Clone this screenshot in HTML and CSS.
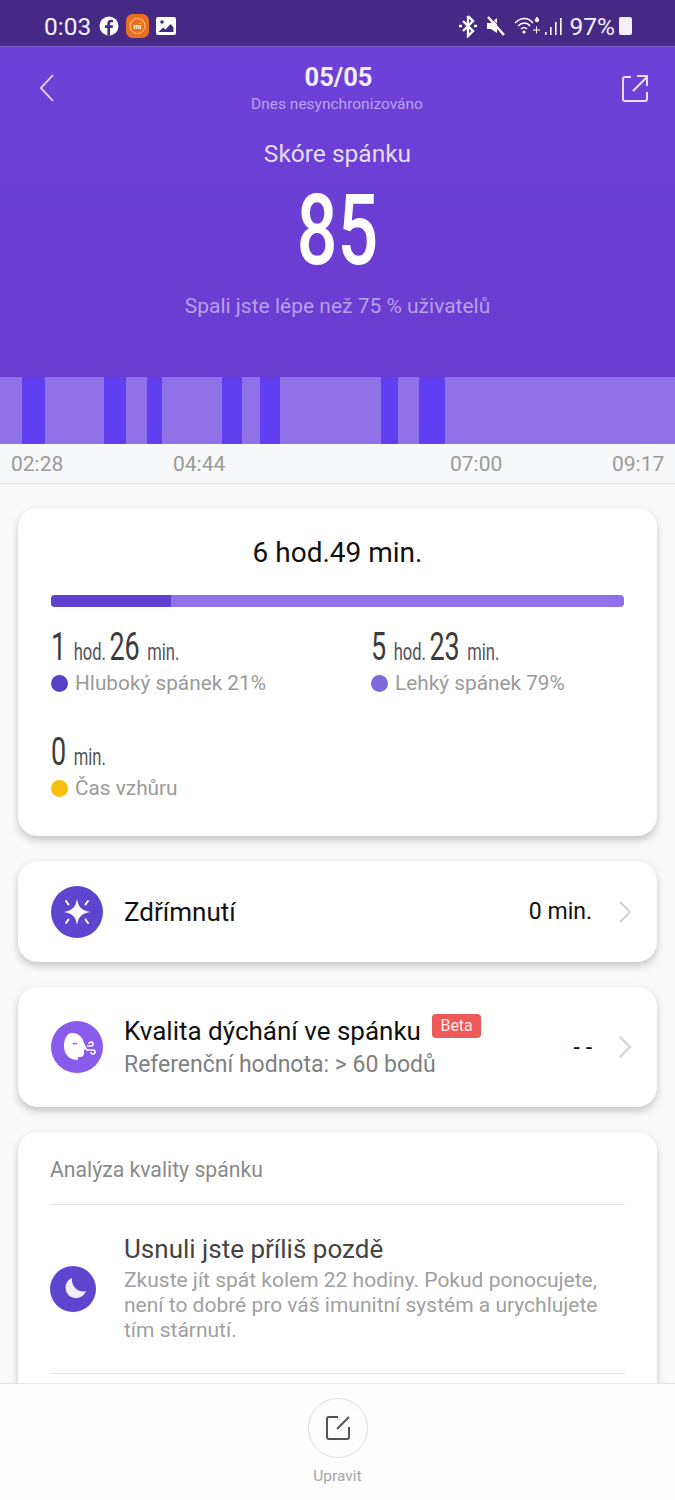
FILE: index.html
```html
<!DOCTYPE html>
<html lang="cs">
<head>
    <meta charset="UTF-8">
    <meta name="viewport" content="width=device-width, initial-scale=1.0">
    <title>Skóre spánku</title>
    <link rel="stylesheet" href="styles.css">
</head>
<body>
    <div class="status">
        <div class="status_left">
            <span class="clock">0:03</span>
            <svg class="st_icon" width="20" height="20" viewBox="0 0 20 20"><circle cx="10" cy="10" r="9.500" fill="#fff"/><path d="M11 19.500V12h2.600l.4-2.800h-3V7.600c0-.9.4-1.300 1.300-1.300H14V4c-.6-.1-1.300-.2-2-.2-2.200 0-3.600 1.300-3.600 3.500v1.900H6V12h2.400v7.500z" fill="#452a85"/></svg>
            <svg class="st_icon" width="23" height="24" viewBox="0 0 23 24"><path d="M7 0h9c4 0 7 3 7 7v10c0 4-3 7-7 7H7c-4 0-7-3-7-7V7c0-4 3-7 7-7z" fill="#e8701f"/><circle cx="11.500" cy="12" r="7.500" fill="none" stroke="#ffb27a" stroke-width="1.200"/><text class="mi_text" x="11.500" y="14.500" text-anchor="middle">mi</text></svg>
            <svg class="st_icon" width="20" height="20" viewBox="0 0 20 20"><rect x="0" y="1" width="20" height="18" rx="2" fill="#fff"/><circle cx="6" cy="6" r="1.800" fill="#452a85"/><path d="M2.500 16l4.500-4.500 2.500 2L14.500 8l3 3.500V16z" fill="#452a85"/></svg>
        </div>
        <div class="status_right">
            <svg class="st_bt" width="20" height="24" viewBox="0 0 20 24"><path d="M10 2v20l5-5L5 7M10 2l5 5L5 17" fill="none" stroke="#fff" stroke-width="2.400"/><path d="M1 12h3M16 12h3" stroke="#fff" stroke-width="2.400"/></svg>
            <svg class="st_mute" width="20" height="22" viewBox="0 0 20 22"><path d="M1 8h4l6-5v15l-6-4H1z" fill="#fff"/><path d="M2 2l16 18" stroke="#fff" stroke-width="2.400"/><path d="M2 2l16 18" stroke="#452a85" stroke-width=".8" transform="translate(1.500 -1.500)"/></svg>
            <svg class="st_wifi" width="27" height="22" viewBox="0 0 27 22"><g fill="none" stroke="#fff" stroke-width="1.500"><path d="M1 8c6-6 13-6 18 0"/><path d="M4 11c4-4 9-4 12 0"/><path d="M7 14c2-2 4-2 6 0"/></g><circle cx="10" cy="17" r="1.600" fill="#fff"/><path d="M23 2l1.800 3a1.800 1.800 0 1 1-3.600 0zM19 15h7M22.500 11.500v7" fill="#fff" stroke="#fff" stroke-width="1"/></svg>
            <svg class="st_signal" width="19" height="22" viewBox="0 0 19 22"><g fill="#fff"><rect x="1" y="17" width="1.600" height="3"/><rect x="6" y="12" width="1.600" height="8"/><rect x="11" y="7" width="1.600" height="13"/><rect x="16" y="3" width="1.600" height="17"/></g></svg>
            <span class="battery_text">97%</span>
            <div class="battery"></div>
        </div>
    </div>

    <div class="head">
        <div class="head_top">
            <svg class="head_icon" width="18" height="30" viewBox="0 0 18 30"><path d="M15 2L3 15l12 13" fill="none" stroke="#e9def9" stroke-width="1.800"/></svg>
            <div class="head_title">
                <p class="date">05/05</p>
                <p class="sync">Dnes nesynchronizováno</p>
            </div>
            <svg class="head_icon" width="28" height="28" viewBox="0 0 28 28"><path d="M10 3H4a2 2 0 0 0-2 2v20a2 2 0 0 0 2 2h20a2 2 0 0 0 2-2v-7M12 17L26 3M16 2h10v10" fill="none" stroke="#e9def9" stroke-width="2"/></svg>
        </div>
        <p class="score_label">Skóre spánku</p>
        <p class="score">85</p>
        <p class="score_note">Spali jste lépe než 75 % uživatelů</p>
    </div>

    <div class="chart">
        <div class="light" style="width:22px"></div>
        <div class="deep" style="width:23px"></div>
        <div class="light" style="width:59px"></div>
        <div class="deep" style="width:22px"></div>
        <div class="light" style="width:21px"></div>
        <div class="deep" style="width:15px"></div>
        <div class="light" style="width:60px"></div>
        <div class="deep" style="width:20px"></div>
        <div class="light" style="width:18px"></div>
        <div class="deep" style="width:20px"></div>
        <div class="light" style="width:101px"></div>
        <div class="deep" style="width:17px"></div>
        <div class="light" style="width:21px"></div>
        <div class="deep" style="width:26px"></div>
        <div class="light" style="width:230px"></div>
    </div>
    <div class="times">
        <span>02:28</span>
        <span>04:44</span>
        <span>07:00</span>
        <span>09:17</span>
    </div>

    <div class="content">
        <div class="card summary">
            <p class="total">6 hod.49 min.</p>
            <div class="ratio">
                <div class="ratio_deep"></div>
            </div>
            <div class="stats">
                <div class="stat">
                    <p class="stat_value"><b>1</b>hod.<b class="num_mid">26</b>min.</p>
                    <p class="stat_label"><i class="dot dot_deep"></i>Hluboký spánek 21%</p>
                </div>
                <div class="stat">
                    <p class="stat_value"><b>5</b>hod.<b class="num_mid">23</b>min.</p>
                    <p class="stat_label"><i class="dot dot_light"></i>Lehký spánek 79%</p>
                </div>
                <div class="stat">
                    <p class="stat_value"><b>0</b>min.</p>
                    <p class="stat_label"><i class="dot dot_awake"></i>Čas vzhůru</p>
                </div>
            </div>
        </div>

        <div class="card row nap">
            <svg class="row_icon" width="52" height="52" viewBox="0 0 52 52"><circle cx="26" cy="26" r="26" fill="#5e45d0"/><path d="M26 13c1.500 8 4.500 11.500 13 13-8.500 1.500-11.500 4.500-13 13-1.500-8.500-4.500-11.500-13-13 8.500-1.500 11.500-5 13-13z" fill="#fff"/><path d="M15 15l2.500 3.500M37 15l-2.500 3.500M15 37l2.500-3.500M37 37l-2.500-3.500" stroke="#fff" stroke-width="2" stroke-linecap="round"/></svg>
            <div class="row_text">
                <p class="row_title">Zdřímnutí</p>
            </div>
            <span class="row_value">0 min.</span>
            <svg class="chevron" width="14" height="24" viewBox="0 0 14 24"><path d="M2 2l10 10L2 22" fill="none" stroke="#d0d0d0" stroke-width="2"/></svg>
        </div>

        <div class="card row breath">
            <svg class="row_icon" width="52" height="52" viewBox="0 0 52 52"><circle cx="26" cy="26" r="26" fill="#8a5bea"/><path d="M21 12c7 0 11 5 12 10l3 6-3 1v3c0 3-2 4-4 4h-2v3c-9 0-14-6-14-14 0-7 3-13 8-13z" fill="#fff"/><path d="M22 22c1 1 3 1 4 0" fill="none" stroke="#8a5bea" stroke-width="1.300"/><path d="M36 25h4a2 2 0 1 0-2-2M35 29h7a2 2 0 1 1-2 2" fill="none" stroke="#fff" stroke-width="1.500"/></svg>
            <div class="row_text">
                <p class="row_title">Kvalita dýchání ve spánku<span class="beta">Beta</span></p>
                <p class="row_sub">Referenční hodnota: &gt; 60 bodů</p>
            </div>
            <span class="row_value dash">- -</span>
            <svg class="chevron" width="14" height="24" viewBox="0 0 14 24"><path d="M2 2l10 10L2 22" fill="none" stroke="#d0d0d0" stroke-width="2"/></svg>
        </div>

        <div class="card analysis">
            <p class="analysis_title">Analýza kvality spánku</p>
            <div class="advice">
                <svg width="46" height="46" viewBox="0 0 46 46"><circle cx="23" cy="23" r="23" fill="#5e45d0"/><path d="M22 12a10.500 10.500 0 1 0 14 13c-7 2-15-4-14-13z" fill="#f2edfc"/></svg>
                <div class="advice_text">
                    <p class="advice_title">Usnuli jste příliš pozdě</p>
                    <p class="advice_desc">Zkuste jít spát kolem 22 hodiny. Pokud ponocujete, není to dobré pro váš imunitní systém a urychlujete tím stárnutí.</p>
                </div>
            </div>
        </div>
    </div>

    <div class="foot">
        <div class="edit">
            <svg width="26" height="26" viewBox="0 0 26 26"><path d="M13 2H4a2 2 0 0 0-2 2v18a2 2 0 0 0 2 2h18a2 2 0 0 0 2-2v-10M12 14L24 2" fill="none" stroke="#555" stroke-width="2"/></svg>
        </div>
        <p class="edit_label">Upravit</p>
    </div>
</body>
</html>
```

FILE: styles.css
```css
*{
    box-sizing: border-box;
}
body{
    margin: 0;
    width: 675px;
    height: 1500px;
    overflow: hidden;
    display: flex;
    flex-direction: column;
    background-color: #fafafb;
    font-family: Roboto, "Liberation Sans", sans-serif;
}
p{
    margin: 0;
}
.status{
    height: 47px;
    flex: none;
    padding: 6px 43px 0 44px;
    display: flex;
    justify-content: space-between;
    align-items: center;
    background-color: #452a85;
    border-bottom: 1px solid #7a5cc9;
    color: #f4f0fb;
}
.status_left,.status_right{
    display: flex;
    align-items: center;
}
.clock{
    font-size: 24.5px;
    margin-right: 8px;
}
.st_icon{
    margin-right: 7px;
}
.mi_text{
    font-size: 7px;
    font-weight: 700;
    fill: #fff;
}
.st_mute{
    margin-left: 8px;
}
.st_wifi{
    margin-left: 8px;
}
.st_signal{
    margin-left: 3px;
}
.battery_text{
    font-size: 24.5px;
    margin-left: 7px;
}
.battery{
    width: 13px;
    height: 18px;
    margin-left: 4px;
    background-color: #f4f0fb;
    border-radius: 2px;
}
.head{
    height: 330px;
    flex: none;
    padding: 15px 26px 0 38px;
    background: linear-gradient(#6d41d9, #6a3bd0);
    text-align: center;
}
.head_top{
    display: flex;
    justify-content: space-between;
    align-items: center;
}
.head_icon{
    flex: none;
}
.head_title{
    flex: 1;
}
.date{
    font-size: 25.5px;
    font-weight: 700;
    color: #f3eefc;
}
.sync{
    font-size: 15.5px;
    margin-top: 3px;
    margin-left: -3px;
    color: #b9a3ec;
}
.score_label{
    font-size: 24.5px;
    margin-top: 26px;
    margin-left: -12px;
    color: #e6dcf8;
}
.score{
    font-size: 98px;
    font-weight: 500;
    line-height: 100px;
    margin-top: 13px;
    margin-left: -12px;
    color: #fff;
    transform: scaleX(0.73);
}
.score_note{
    font-size: 21px;
    margin-top: 13px;
    margin-left: -12px;
    color: #b5a0ea;
}
.chart{
    height: 67px;
    flex: none;
    display: flex;
}
.light{
    background-color: #8f72e8;
}
.deep{
    background-color: #5f3ff0;
}
.times{
    height: 40px;
    flex: none;
    padding: 0 11px;
    display: grid;
    grid-template-columns: 162px 277px 162px auto;
    align-items: center;
    font-size: 21px;
    color: #9a9a9a;
    background-color: #f7f8f9;
    border-bottom: 1px solid #e2e2e4;
}
.content{
    flex: 1;
    overflow: hidden;
    padding: 24px 18px 0;
    display: flex;
    flex-direction: column;
    gap: 25px;
}
.card{
    flex: none;
    background-color: #fff;
    border-radius: 20px;
    box-shadow: 0 4px 9px rgba(0,0,0,0.22);
}
.summary{
    height: 328px;
    padding: 27px 33px 0;
}
.total{
    font-size: 28px;
    line-height: 36px;
    text-align: center;
    color: #111;
}
.ratio{
    height: 12px;
    margin-top: 24px;
    border-radius: 4px;
    overflow: hidden;
    background-color: #8f72e8;
}
.ratio_deep{
    width: 21%;
    height: 100%;
    background-color: #5f42cf;
}
.stats{
    margin-top: 22px;
    display: grid;
    grid-template-columns: 320px auto;
    row-gap: 38px;
}
/* digits in the reference are a tall condensed face, none is installed */
.stat_value{
    font-size: 24px;
    line-height: 36px;
    color: #555;
    white-space: nowrap;
    transform: scaleX(0.69);
    transform-origin: left center;
}
.stat_value b{
    font-weight: 400;
    font-size: 39px;
    margin-right: 11px;
    color: #3c3c3c;
}
.stat_value .num_mid{
    margin-left: 5px;
}
.stat_label{
    display: flex;
    align-items: center;
    font-size: 20.8px;
    line-height: 26px;
    color: #9a9a9a;
}
.dot{
    width: 17px;
    height: 17px;
    margin-right: 7px;
    border-radius: 50%;
}
.dot_deep{
    background-color: #5640c8;
}
.dot_light{
    background-color: #7f68dc;
}
.dot_awake{
    background-color: #f6c00c;
}
.row{
    padding: 0 25px 0 33px;
    display: flex;
    align-items: center;
}
.nap{
    height: 101px;
}
.breath{
    height: 120px;
}
.row_text{
    flex: 1;
    margin-left: 21px;
}
.row_title{
    font-size: 26px;
    line-height: 32px;
    color: #111;
}
.beta{
    display: inline-block;
    vertical-align: 9px;
    margin-left: 11px;
    padding: 0 8.5px;
    font-size: 16px;
    line-height: 24px;
    border-radius: 4px;
    color: #ffe5e5;
    background-color: #ee5a5a;
}
.row_sub{
    font-size: 23px;
    line-height: 30px;
    margin-top: 3px;
    color: #808080;
}
.row_value{
    font-size: 23px;
    color: #111;
}
.chevron{
    margin-left: 26px;
}
.analysis{
    height: 300px;
    padding: 0 32px;
}
.analysis_title{
    height: 73px;
    font-size: 21.2px;
    line-height: 76px;
    color: #8a8a8a;
    border-bottom: 1px solid #e4e4e4;
}
.advice{
    height: 169px;
    display: flex;
    align-items: center;
    gap: 28px;
    border-bottom: 1px solid #e4e4e4;
}
.advice svg{
    flex: none;
}
.advice_title{
    font-size: 26px;
    line-height: 32px;
    margin-top: -2px;
    color: #444;
}
.advice_desc{
    font-size: 21px;
    line-height: 25px;
    margin-top: 3px;
    color: #a0a0a0;
}
.foot{
    height: 117px;
    flex: none;
    padding-top: 14px;
    text-align: center;
    background-color: #fefefe;
    border-top: 1px solid #e4e4e6;
}
.edit{
    width: 60px;
    height: 60px;
    margin: 0 auto;
    display: flex;
    align-items: center;
    justify-content: center;
    border: 1px solid #ddd;
    border-radius: 50%;
}
.edit_label{
    font-size: 15.5px;
    margin-top: 9px;
    color: #a5a5a5;
}
```
